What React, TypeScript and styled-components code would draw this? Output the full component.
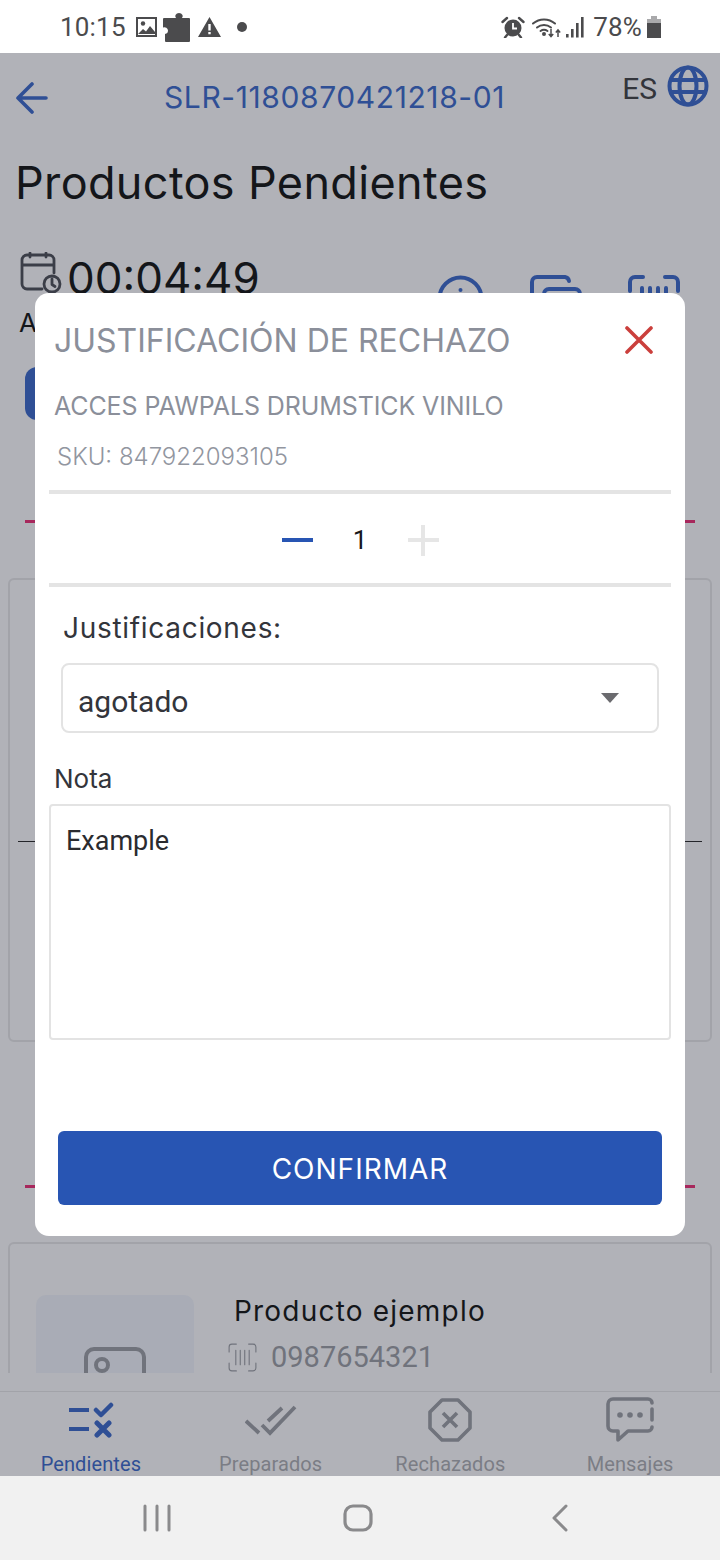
import React from "react";
import styled, { createGlobalStyle } from "styled-components";

const BLUE = "#2855b3";
const DIM_BLUE = "#2f4f95";
const DIM_GREY = "#70737c";
const INK = "#14161a";
const HEAD_FONT = `"Inter", "Liberation Sans", sans-serif`;
const BODY_FONT = `Roboto, "Liberation Sans", sans-serif`;

const GlobalStyle = createGlobalStyle`
  html, body {
    margin: 0;
    padding: 0;
    background: #f1f1f1;
  }
`;

const Root = styled.div`
  position: relative;
  width: 720px;
  height: 1560px;
  display: flex;
  flex-direction: column;
  overflow: hidden;
  font-family: ${HEAD_FONT};
`;

/* status bar */
const StatusBar = styled.div`
  height: 53px;
  flex: none;
  display: flex;
  align-items: center;
  padding: 0 59px 0 60px;
  background: #ffffff;
  color: #4b4b4d;
`;

const StatusTime = styled.span`
  font-family: ${BODY_FONT};
  font-size: 26px;
  font-weight: 400;
  letter-spacing: 0.2px;
  margin-right: 10px;
`;

const StatusGroup = styled.div`
  display: flex;
  align-items: center;
`;

const StatusRight = styled(StatusGroup)`
  margin-left: auto;
`;

const StatusSlot = styled.span<{ $left?: number }>`
  display: flex;
  margin-left: ${(p) => p.$left ?? 0}px;
`;

const StatusPercent = styled.span`
  font-family: ${BODY_FONT};
  font-size: 26px;
  letter-spacing: 0.2px;
  margin-left: 9px;
`;

/* screen behind the dialog */
const Screen = styled.div`
  flex: 1;
  display: flex;
  flex-direction: column;
  background: #b1b2b8;
  min-height: 0;
`;

const Scroller = styled.div`
  height: 1320px;
  flex: none;
  overflow: hidden;
`;

const TopBar = styled.div`
  height: 88px;
  display: flex;
  align-items: flex-start;
  padding: 12px 11px 0 16px;
`;

const BackButton = styled.div`
  width: 32px;
  height: 32px;
  margin-top: 17px;
  color: ${DIM_BLUE};
`;

const OrderCode = styled.div`
  margin: 14px 0 0 116px;
  font-size: 30px;
  line-height: 36px;
  color: ${DIM_BLUE};
  white-space: nowrap;
  letter-spacing: 0.6px;
`;

const Lang = styled.div`
  margin-left: auto;
  display: flex;
  align-items: flex-start;
  gap: 10px;
  color: #33353b;
  font-family: ${BODY_FONT};
  font-size: 30px;
`;

const LangLabel = styled.span`
  margin-top: 6px;
`;

const PageTitle = styled.h1`
  margin: 0;
  padding-left: 15px;
  height: 84px;
  font-size: 45px;
  line-height: 60px;
  font-weight: 400;
  letter-spacing: 0.35px;
  color: ${INK};
`;

const TimerRow = styled.div`
  height: 59px;
  margin-top: 15px;
  display: flex;
  align-items: flex-start;
  padding-left: 20px;
`;

const Timer = styled.span`
  margin: -2px 0 0 5px;
  font-size: 44px;
  line-height: 56px;
  color: ${INK};
`;

const TimerActions = styled.div`
  margin-left: auto;
  display: flex;
  gap: 46px;
  padding: 23px 40px 0 0;
  color: ${DIM_BLUE};
`;

const StateLetter = styled.div`
  padding-left: 19px;
  font-size: 26px;
  line-height: 30px;
  color: ${INK};
  margin-top: -3px;
`;

const StateButton = styled.div`
  width: 200px;
  height: 53px;
  margin: 29px 0 0 25px;
  border-radius: 12px;
  background: ${DIM_BLUE};
`;

const PinkRule = styled.div<{ $top: number }>`
  height: 3px;
  margin: ${(p) => p.$top}px 25px 0;
  background: #a7285c;
`;

const Card = styled.div<{ $top: number; $height: number }>`
  box-sizing: border-box;
  height: ${(p) => p.$height}px;
  margin: ${(p) => p.$top}px 8px 0;
  border: 2px solid #a2a3a9;
  border-radius: 6px;
`;

const CardRule = styled.div`
  height: 1px;
  margin: 261px 8px 0;
  background: #24252a;
`;

const ProductRow = styled.div`
  display: flex;
  padding: 51px 0 0 26px;
  gap: 40px;
`;

const Thumb = styled.div`
  width: 158px;
  height: 160px;
  flex: none;
  border-radius: 10px;
  background: #a9acb6;
  display: flex;
  justify-content: center;
  padding-top: 52px;
  box-sizing: border-box;
  color: #70737c;
`;

const ProductInfo = styled.div`
  display: flex;
  flex-direction: column;
`;

const ProductName = styled.div`
  font-size: 28px;
  line-height: 32px;
  color: ${INK};
  white-space: nowrap;
  letter-spacing: 1.2px;
`;

const ProductCode = styled.div`
  display: flex;
  align-items: center;
  gap: 14px;
  margin: 15px 0 0 -6px;
  line-height: 30px;
  color: ${DIM_GREY};
  font-family: ${BODY_FONT};
  font-size: 29px;
`;

/* tab bar */
const TabBar = styled.nav`
  margin-top: 18px;
  padding-left: 1px;
  flex: 1;
  display: grid;
  grid-template-columns: repeat(4, 179.75px);
  border-top: 1px solid #a2a3a9;
`;

const Tab = styled.div<{ $active?: boolean }>`
  display: flex;
  flex-direction: column;
  align-items: center;
  color: ${(p) => (p.$active ? DIM_BLUE : DIM_GREY)};
`;

const TabIcon = styled.div`
  height: 56px;
  margin-bottom: 4px;
  display: flex;
  align-items: center;
  justify-content: center;
`;

const TabLabel = styled.span<{ $active?: boolean }>`
  font-family: ${BODY_FONT};
  font-size: 20px;
  line-height: 24px;
  letter-spacing: 0.1px;
  color: ${(p) => (p.$active ? DIM_BLUE : "#7b7d85")};
`;

/* android navigation */
const NavBar = styled.div`
  height: 84px;
  flex: none;
  display: flex;
  align-items: center;
  background: #f1f1f1;
  color: #8a8a8c;
  padding-left: 143px;
`;

const NavSlot = styled.div<{ $width: number }>`
  width: ${(p) => p.$width}px;
  display: flex;
`;

/* dialog, lies over the screen */
const Dialog = styled.section`
  position: absolute;
  top: 293px;
  left: 35px;
  width: 650px;
  height: 943px;
  box-sizing: border-box;
  display: flex;
  flex-direction: column;
  background: #ffffff;
  border-radius: 14px;
`;

const DialogHead = styled.div`
  height: 44px;
  margin-top: 25px;
  padding: 0 32px 0 19px;
  display: flex;
  align-items: center;
  justify-content: space-between;
`;

const DialogTitle = styled.h2`
  margin: 0;
  font-size: 32px;
  font-weight: 400;
  color: #8b8f9a;
  white-space: nowrap;
`;

const CloseIcon = styled.div`
  width: 28px;
  height: 28px;
  color: #cb3f3c;
`;

const ItemName = styled.div`
  margin: 29px 0 0 19px;
  font-size: 25px;
  line-height: 30px;
  color: #8b8f9a;
  white-space: nowrap;
  letter-spacing: -0.1px;
`;

const Sku = styled.div`
  margin: 21px 0 0 22px;
  font-size: 24px;
  line-height: 30px;
  font-weight: 300;
  color: #92969f;
  white-space: nowrap;
`;

const Divider = styled.div<{ $top?: number }>`
  height: 4px;
  flex: none;
  margin: ${(p) => p.$top ?? 0}px 14px 0;
  background: #e4e4e4;
`;

const Stepper = styled.div`
  height: 89px;
  padding-top: 3px;
  box-sizing: border-box;
  display: flex;
  align-items: center;
  justify-content: center;
`;

const StepBar = styled.div<{ $off?: boolean }>`
  position: relative;
  width: 31px;
  height: 4px;
  background: ${(p) => (p.$off ? "#e6e6e6" : BLUE)};
`;

const StepCross = styled.div`
  position: absolute;
  left: 13.5px;
  top: -13.5px;
  width: 4px;
  height: 31px;
  background: #e6e6e6;
`;

const StepValue = styled.span`
  width: 95px;
  text-align: center;
  font-family: ${BODY_FONT};
  font-size: 26px;
  color: #17181b;
`;

const FieldLabel = styled.div`
  margin: 24px 0 0 28px;
  font-size: 28px;
  line-height: 34px;
  color: #33353b;
  letter-spacing: 0.7px;
`;

const SelectBox = styled.div`
  height: 70px;
  box-sizing: border-box;
  margin: 18px 26px 0;
  padding: 7px 38px 0 15px;
  display: flex;
  align-items: center;
  justify-content: space-between;
  border: 2px solid #e3e3e3;
  border-radius: 8px;
  font-family: ${BODY_FONT};
  font-size: 30px;
  color: #33353b;
`;

const Caret = styled.div`
  width: 0;
  height: 0;
  margin-top: -7px;
  border-left: 9.5px solid transparent;
  border-right: 9.5px solid transparent;
  border-top: 10px solid #6b6b6f;
`;

const NoteLabel = styled.div`
  margin: 31px 0 0 19px;
  font-size: 26px;
  line-height: 30px;
  color: #33353b;
`;

const NoteBox = styled.div`
  height: 236px;
  box-sizing: border-box;
  margin: 10px 14px 0;
  padding: 19px 15px;
  border: 2px solid #e3e3e3;
  border-radius: 4px;
  font-family: ${BODY_FONT};
  font-size: 27px;
  line-height: 32px;
  color: #2a2b2f;
`;

const ConfirmButton = styled.button`
  height: 74px;
  margin: 91px 23px 0;
  padding: 2px 0 0;
  border: 0;
  border-radius: 6px;
  background: ${BLUE};
  color: #ffffff;
  font-family: ${HEAD_FONT};
  font-size: 28px;
  letter-spacing: 1px;
`;

const StatusIcons = {
  picture: (
    <svg width="21" height="20" viewBox="0 0 21 20">
      <path fill="#4b4b4d" fillRule="evenodd" d="M0 0h21v20H0zM2 2v16h17V2z" />
      <circle cx="7" cy="6.5" r="2.2" fill="#4b4b4d" />
      <path fill="#4b4b4d" d="M2 17l5-5 3 2.5 4-5.5 5 6v2z" />
    </svg>
  ),
  puzzle: (
    <svg width="27" height="31" viewBox="0 0 27 31">
      <path
        fill="#4b4b4d"
        d="M2 7h11a3 3 0 0 1-.5-3 4 4 0 0 1 7 0 3 3 0 0 1-.5 3h7a1 1 0 0 1 1 1v22a1 1 0 0 1-1 1H3a1 1 0 0 1-1-1v-7a3.500 3.500 0 0 0 3-3.500 3.500 3.500 0 0 0-5-3V8a1 1 0 0 1 1-1z"
      />
    </svg>
  ),
  warning: (
    <svg width="23" height="20" viewBox="0 0 23 20">
      <path fill="#4b4b4d" fillRule="evenodd" d="M11.500 0L23 20H0zM10.300 7v6.500h2.400V7zM10.300 15v2.300h2.400V15z" />
    </svg>
  ),
  dot: (
    <svg width="10" height="10" viewBox="0 0 10 10">
      <circle cx="5" cy="5" r="5" fill="#4b4b4d" />
    </svg>
  ),
  alarm: (
    <svg width="24" height="22" viewBox="0 0 24 22">
      <circle cx="12" cy="12" r="8.500" fill="#4b4b4d" />
      <path stroke="#fff" strokeWidth="1.800" fill="none" d="M12 7v5.500h4" />
      <path stroke="#4b4b4d" strokeWidth="2.400" fill="none" strokeLinecap="round" d="M1.500 6L6 2M22.500 6L18 2M6 19l-2 2.500M18 19l2 2.500" />
    </svg>
  ),
  wifi: (
    <svg width="29" height="22" viewBox="0 0 29 22" fill="none" stroke="#4b4b4d" strokeWidth="2" strokeLinecap="round">
      <path d="M1 7.500a17 17 0 0 1 22 0" />
      <path d="M5 11.500a11 11 0 0 1 14 0" />
      <path d="M8.500 15a6 6 0 0 1 7 0" />
      <circle cx="12" cy="18" r="1" fill="#4b4b4d" />
      <path strokeWidth="1.500" strokeLinecap="butt" d="M19 13v7M16.800 18l2.200 2.500 2.200-2.500M26 21v-7M23.800 16.500L26 14l2.200 2.500" />
    </svg>
  ),
  signal: (
    <svg width="19" height="22" viewBox="0 0 19 22" fill="#4b4b4d">
      <path d="M1 18h2.600v3.500H1zM6 13h2.600v8.500H6zM11 7h2.600v14.500H11zM16 1h2.600v20.500H16z" />
    </svg>
  ),
  battery: (
    <svg width="14" height="22" viewBox="0 0 14 22">
      <path fill="#a9a9ab" d="M4 0h6v3h4v4H0V3h4z" />
      <path fill="#4b4b4d" d="M0 7h14v15H0z" />
    </svg>
  ),
};

function GlobeIcon() {
  return (
    <svg width="42" height="42" viewBox="0 0 42 42" fill="none" stroke={DIM_BLUE} strokeWidth="4">
      <circle cx="21" cy="21" r="18.500" />
      <ellipse cx="21" cy="21" rx="8.500" ry="18.500" />
      <path d="M3 15h36M3 27h36" />
    </svg>
  );
}

function BarcodeIcon({ size, weight }: { size: number; weight: number }) {
  return (
    <svg width={size} height={size} viewBox="0 0 52 52" fill="none" stroke="currentColor" strokeWidth={weight} strokeLinecap="round">
      <path d="M2 16V7a5 5 0 0 1 5-5h8M37 2h8a5 5 0 0 1 5 5v9M2 36v9a5 5 0 0 0 5 5h8M37 50h8a5 5 0 0 0 5-5v-9" />
      <path d="M14 13v26M22 13v26M30 13v26M38 13v26" />
    </svg>
  );
}

function App() {
  return (
    <Root>
      <GlobalStyle />
      <StatusBar>
        <StatusTime>10:15</StatusTime>
        <StatusGroup>
          {StatusIcons.picture}
          <StatusSlot $left={6}>{StatusIcons.puzzle}</StatusSlot>
          <StatusSlot $left={8}>{StatusIcons.warning}</StatusSlot>
          <StatusSlot $left={16}>{StatusIcons.dot}</StatusSlot>
        </StatusGroup>
        <StatusRight>
          {StatusIcons.alarm}
          <StatusSlot $left={7}>{StatusIcons.wifi}</StatusSlot>
          <StatusSlot $left={4}>{StatusIcons.signal}</StatusSlot>
          <StatusPercent>78%</StatusPercent>
          <StatusSlot $left={5}>{StatusIcons.battery}</StatusSlot>
        </StatusRight>
      </StatusBar>

      <Screen>
        <Scroller>
          <TopBar>
            <BackButton>
              <svg width="32" height="32" viewBox="0 0 32 32" fill="none" stroke="currentColor" strokeWidth="3.600" strokeLinecap="round" strokeLinejoin="round">
                <path d="M30 16H2M16 2L2 16l14 14" />
              </svg>
            </BackButton>
            <OrderCode>SLR-1180870421218-01</OrderCode>
            <Lang>
              <LangLabel>ES</LangLabel>
              <GlobeIcon />
            </Lang>
          </TopBar>
          <PageTitle>Productos Pendientes</PageTitle>
          <TimerRow>
            <svg width="42" height="42" viewBox="0 0 42 42" fill="none" stroke="#3b3e48" strokeWidth="2.800" strokeLinecap="round" strokeLinejoin="round">
              <path d="M22 37H7a5 5 0 0 1-5-5V8a5 5 0 0 1 5-5h22a5 5 0 0 1 5 5v13M2 13h32M10 1v4M26 1v4" />
              <circle cx="32" cy="32" r="8" />
              <path d="M32 27v5.500l3 2" />
            </svg>
            <Timer>00:04:49</Timer>
            <TimerActions>
              <svg width="47" height="47" viewBox="0 0 47 47" fill="none" stroke="currentColor" strokeWidth="4">
                <circle cx="23.500" cy="23.500" r="21" />
                <circle cx="23.500" cy="15" r="2" fill="currentColor" stroke="none" />
              </svg>
              <svg width="52" height="47" viewBox="0 0 52 47" fill="none" stroke="currentColor" strokeWidth="4" strokeLinecap="round">
                <path d="M2 34V7a5 5 0 0 1 5-5h28a5 5 0 0 1 4 4" />
                <rect x="14" y="14" width="36" height="30" rx="5" />
              </svg>
              <BarcodeIcon size={52} weight={4} />
            </TimerActions>
          </TimerRow>
          <StateLetter>A</StateLetter>
          <StateButton />
          <PinkRule $top={100} />
          <Card $top={55} $height={464}>
            <CardRule />
          </Card>
          <PinkRule $top={143} />
          <Card $top={54} $height={300}>
            <ProductRow>
              <Thumb>
                <svg width="62" height="60" viewBox="0 0 62 60" fill="none" stroke="currentColor" strokeWidth="4">
                  <rect x="2" y="2" width="58" height="56" rx="8" />
                  <circle cx="18" cy="18" r="6" />
                </svg>
              </Thumb>
              <ProductInfo>
                <ProductName>Producto ejemplo</ProductName>
                <ProductCode>
                  <BarcodeIcon size={29} weight={2} />
                  0987654321
                </ProductCode>
              </ProductInfo>
            </ProductRow>
          </Card>
        </Scroller>

        <TabBar>
          <Tab $active>
            <TabIcon>
              <svg width="46" height="36" viewBox="0 0 46 36" fill="none" stroke="currentColor" strokeLinecap="round" strokeLinejoin="round">
                <path strokeWidth="4" strokeLinecap="butt" d="M1 8h20M1 27h20" />
                <path strokeWidth="4.500" d="M28 8l5 5 10-10" />
                <path strokeWidth="5" d="M29 21l12 12M41 21L29 33" />
              </svg>
            </TabIcon>
            <TabLabel $active>Pendientes</TabLabel>
          </Tab>
          <Tab>
            <TabIcon>
              <svg width="52" height="32" viewBox="0 0 52 32" fill="none" stroke="currentColor" strokeWidth="3.800">
                <path d="M1 17l13 12M17 21l8 8L50 3M23 17L37 4" />
              </svg>
            </TabIcon>
            <TabLabel>Preparados</TabLabel>
          </Tab>
          <Tab>
            <TabIcon>
              <svg width="44" height="44" viewBox="0 0 44 44" fill="none" stroke="currentColor" strokeWidth="3.600" strokeLinejoin="round">
                <path d="M14 2h16l12 12v16L30 42H14L2 30V14z" />
                <path d="M15 15l14 14M29 15L15 29" />
              </svg>
            </TabIcon>
            <TabLabel>Rechazados</TabLabel>
          </Tab>
          <Tab>
            <TabIcon>
              <svg width="48" height="46" viewBox="0 0 48 46" fill="none" stroke="currentColor" strokeWidth="3.600" strokeLinecap="round" strokeLinejoin="round">
                <path d="M46 6a4 4 0 0 0-4-4H7a5 5 0 0 0-5 5v22a5 5 0 0 0 5 5h5v9l10-9h20a4 4 0 0 0 4-4M46 12v11" />
                <circle cx="14" cy="18" r="2.800" fill="currentColor" stroke="none" />
                <circle cx="24" cy="18" r="2.800" fill="currentColor" stroke="none" />
                <circle cx="34" cy="18" r="2.800" fill="currentColor" stroke="none" />
              </svg>
            </TabIcon>
            <TabLabel>Mensajes</TabLabel>
          </Tab>
        </TabBar>
      </Screen>

      <NavBar>
        <NavSlot $width={200}>
          <svg width="28" height="28" viewBox="0 0 28 28" stroke="currentColor" strokeWidth="3" strokeLinecap="round">
            <path d="M2 2v24M14 2v24M26 2v24" />
          </svg>
        </NavSlot>
        <NavSlot $width={209}>
          <svg width="30" height="28" viewBox="0 0 30 28" fill="none" stroke="currentColor" strokeWidth="3.200">
            <rect x="2" y="2" width="26" height="24" rx="8" />
          </svg>
        </NavSlot>
        <NavSlot $width={20}>
          <svg width="16" height="28" viewBox="0 0 16 28" fill="none" stroke="currentColor" strokeWidth="3" strokeLinecap="round" strokeLinejoin="round">
            <path d="M14 2L2 14l12 12" />
          </svg>
        </NavSlot>
      </NavBar>

      <Dialog>
        <DialogHead>
          <DialogTitle>JUSTIFICACIÓN DE RECHAZO</DialogTitle>
          <CloseIcon>
            <svg width="28" height="28" viewBox="0 0 28 28" stroke="currentColor" strokeWidth="3.600" strokeLinecap="round">
              <path d="M2 2l24 24M26 2L2 26" />
            </svg>
          </CloseIcon>
        </DialogHead>
        <ItemName>ACCES PAWPALS DRUMSTICK VINILO</ItemName>
        <Sku>SKU: 847922093105</Sku>
        <Divider $top={18} />
        <Stepper>
          <StepBar />
          <StepValue>1</StepValue>
          <StepBar $off>
            <StepCross />
          </StepBar>
        </Stepper>
        <Divider />
        <FieldLabel>Justificaciones:</FieldLabel>
        <SelectBox>
          agotado
          <Caret />
        </SelectBox>
        <NoteLabel>Nota</NoteLabel>
        <NoteBox>Example</NoteBox>
        <ConfirmButton>CONFIRMAR</ConfirmButton>
      </Dialog>
    </Root>
  );
}

export default App;
